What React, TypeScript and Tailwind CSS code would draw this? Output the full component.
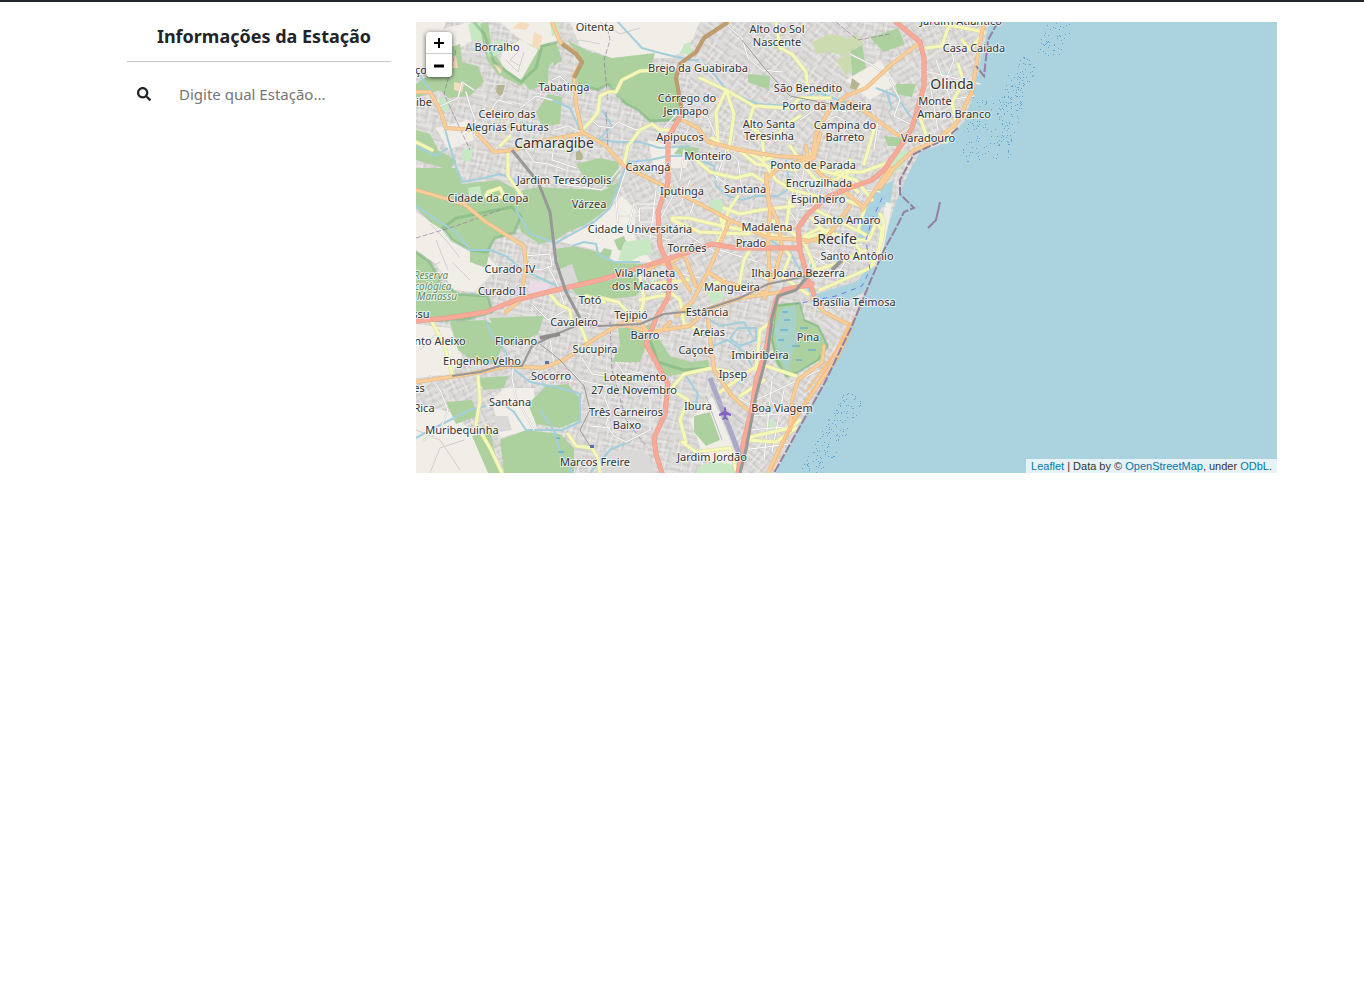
import { FaSearch } from "react-icons/fa";

type Label = [string, number, number];

const SMALL: Label[] = [
  ["Oitenta", 595, 31], ["Borralho", 497, 51], ["Brejo da Guabiraba", 698, 72], ["Tabatinga", 564, 91],
  ["Córrego do", 687, 102], ["Jenipapo", 686, 115], ["Celeiro das", 507, 118], ["Alegrias Futuras", 507, 131],
  ["Apipucos", 680, 141], ["Monteiro", 708, 160], ["Caxangá", 648, 171], ["Alto do Sol", 777, 33],
  ["Nascente", 777, 46], ["São Benedito", 808, 92], ["Porto da Madeira", 827, 110], ["Alto Santa", 769, 128],
  ["Teresinha", 769, 140], ["Campina do", 845, 129], ["Barreto", 845, 141], ["Jardim Atlântico", 961, 25],
  ["Casa Caiada", 974, 52], ["Monte", 935, 105], ["Amaro Branco", 954, 118], ["Varadouro", 928, 142],
  ["Ponto de Parada", 813, 169], ["Encruzilhada", 819, 187], ["Espinheiro", 818, 203], ["Santana", 745, 193],
  ["Iputinga", 682, 195], ["Santo Amaro", 847, 224], ["Santo Antônio", 857, 260], ["Madalena", 767, 231],
  ["Prado", 751, 247], ["Torrões", 687, 252], ["Cidade Universitária", 640, 233], ["Jardim Teresópolis", 564, 184],
  ["Cidade da Copa", 488, 202], ["Várzea", 589, 208], ["Curado IV", 510, 273], ["Curado II", 502, 295],
  ["Totó", 590, 304], ["Vila Planeta", 645, 277], ["dos Macacos", 645, 290], ["Mangueira", 732, 291],
  ["Ilha Joana Bezerra", 798, 277], ["Brasília Teimosa", 854, 306], ["Estância", 707, 316], ["Tejipió", 631, 319],
  ["Cavaleiro", 574, 326], ["Areias", 709, 336], ["Barro", 645, 339], ["Pina", 808, 341],
  ["Caçote", 696, 354], ["Imbiribeira", 760, 359], ["Sucupira", 595, 353], ["Floriano", 516, 345],
  ["Engenho Velho", 482, 365], ["Socorro", 551, 380], ["Ipsep", 733, 378], ["Loteamento", 635, 381],
  ["27 de Novembro", 634, 394], ["Três Carneiros", 626, 416], ["Baixo", 627, 429], ["Ibura", 698, 410],
  ["Boa Viagem", 782, 412], ["Jardim Jordão", 712, 461], ["Marcos Freire", 595, 466], ["Santana", 510, 406],
  ["Muribequinha", 462, 434], ["nto Aleixo", 440, 345], ["Rica", 424, 412], ["ço", 421, 74],
  ["ibe", 424, 106], ["es", 419, 392], ["ssu", 421, 318],
];

const FOREST = [
  "M567 40L590 52L612 58L655 53L652 64L662 72L677 70L678 98L684 112L676 121L650 122L638 110L624 103L616 90L606 84L598 90L578 84L575 70L582 60Z",
  "M478 24L488 22L492 50L506 70L521 80L532 68L541 45L534 75L521 86L497 74L487 60Z",
  "M548 46L556 42L562 60L554 66Z",
  "M521 80L541 45L549 60L548 84L530 90Z",
  "M416 84L436 70L448 48L460 44L462 62L478 66L484 82L470 96L448 98L440 90L416 98Z",
  "M548 94L562 97L560 124L542 127L536 112Z",
  "M536 47L549 43L560 52L548 68Z",
  "M416 130L430 134L438 150L456 160L450 170L416 160Z",
  "M416 168L456 168L462 184L498 180L514 188L520 208L509 212L490 218L460 226L443 230L430 222L416 208Z",
  "M443 228L456 218L512 207L521 216L514 233L495 238L487 252L470 250L452 240Z",
  "M522 190L540 187L556 188L604 190L622 180L616 196L608 208L594 219L585 225L566 233L556 240L540 244L521 232L516 212Z",
  "M556 249L574 246L602 253L616 263L648 264L636 270L600 280L576 288L560 280Z",
  "M572 289L636 274L646 282L636 296L602 300L580 298Z",
  "M576 164L600 158L618 162L620 172L610 188L586 180Z",
  "M470 250L490 250L486 268L470 262Z",
  "M416 252L430 262L442 284L458 294L488 296L492 312L464 320L416 321Z",
  "M450 322L484 320L502 328L504 342L495 364L474 362L458 350Z",
  "M490 318L544 316L538 334L512 346L496 340Z",
  "M528 404L546 386L568 384L580 398L580 420L560 428L536 424Z",
  "M500 440L526 430L560 434L574 448L574 473H504Z",
  "M472 436L490 432L500 473L488 473Z",
  "M446 402L472 400L478 416L456 424Z",
  "M648 338L660 340L670 356L690 362L708 360L710 370L688 373L668 376L656 366Z",
  "M618 328L642 328L646 345L640 362L612 362L620 345Z",
  "M748 74L770 76L769 90L748 82Z",
  "M870 38L898 28L905 44L884 52Z", "M850 50L862 42L866 68L852 76Z", "M896 84L916 84L912 97L897 94Z",
  "M884 136L904 138L904 146L888 146Z", "M694 416L710 412L720 440L706 446L694 432Z",
  "M614 240L624 236L630 252L618 250Z", "M604 248L612 250L610 258L600 254Z",
  "M476 378L508 376L504 388L484 390Z", "M680 146L700 148L694 156L674 154Z", "M644 326L652 324L654 332L646 332Z",
];

const COUNTRY = [
  "M416 22H446L436 50L416 58Z", "M500 22H552L560 40L534 48L516 36Z", "M570 22H700L690 44L672 58L612 58L580 46Z", "M500 66L520 80L534 66L540 48L520 40L502 50Z",
  "M416 212L446 232L486 254L498 268L474 292L454 290L436 264L416 250Z", "M560 242L600 218L622 196L636 210L634 236L652 262L616 262L596 250Z",
  "M416 324L450 328L462 356L452 374L416 378Z", "M416 404L450 412L482 440L496 473H416Z", "M504 388L534 388L536 428L500 438L492 400Z",
  "M690 420L712 396L738 460L724 470L704 456Z", "M846 80L880 60L896 84L870 100Z", "M648 140L690 150L686 168L654 168Z", "M436 128L468 120L474 140L448 150Z",
  "M416 44L446 28L470 22L480 36L450 54L440 70L416 76Z",
];

const LIGHT = [
  "M485 48L500 38L508 50L490 58Z", "M468 24L480 22L482 40L472 42Z", "M550 22H558L560 34L552 36Z", "M684 44L690 42L692 54L680 54Z",
  "M708 202L720 198L726 208L716 216Z", "M706 292L722 282L724 298L712 304Z", "M624 242L650 238L652 254L640 256L630 262L618 260Z",
  "M765 422L774 420L776 430L766 430Z", "M890 178L904 164L908 150L896 152L880 190Z", "M468 188L480 186L482 198L470 200Z",
  "M440 98L452 100L448 112L438 108Z", "M462 150L474 148L470 162L462 160Z", "M700 466L712 462L730 464L740 473H696Z",
];

const CREEKS = [
  "M416 70L430 90L440 110L448 140L456 166L462 182L484 178L500 174L515 180",
  "M515 180L517 212L530 234L556 243L572 234L594 222L610 208L620 180L628 162L650 160L668 156L690 156L714 166L716 186L728 196L742 200L756 196L778 196L790 188L786 160",
  "M416 206L440 222L456 232L470 250L490 250L506 256L520 268L548 282L570 292",
  "M616 20L642 48L664 54L690 60L700 60L716 76L728 92L758 104L794 106L816 92L850 104L866 112",
  "M548 98L570 108L580 130L590 138L616 142L640 142L660 148L690 146", "M416 146L436 156L448 148",
  "M572 246L584 242L596 244L598 254L614 262L640 262M602 110L612 126L600 138",
  "M486 320L492 336L506 352L512 368L530 382L560 388L580 394L580 422L562 430L526 430L514 412L498 400",
  "M554 432L560 450L572 473M540 410L556 434", "M690 308L720 326L744 322L752 336M730 338L738 328L756 328L756 340L740 346Z",
  "M876 88L896 96L910 116L926 130M886 90L892 110", "M712 346L728 340L744 352L752 366", "M416 438L442 424L470 410L486 406",
  "M686 376L698 394L694 410", "M590 473L610 450L632 440", "M770 240L790 252L800 270L810 292",
];

const WHITE = [
  "M466 92L470 106L476 122M478 140L484 120L498 100L512 104M520 108L536 96L552 100M436 108L458 98L462 82L474 90",
  "M552 80L560 76L570 86M728 26L742 38L748 58L762 70L782 72M700 60L722 88L750 104L764 108",
  "M590 118L598 126L612 128L618 122L636 130L642 128M664 128L686 104M690 110L708 118L716 136",
  "M554 144L552 160L576 168M546 176L560 184L602 190L622 166M554 130L568 126L580 132",
  "M640 208H654V222H640ZM634 204H660M634 204L628 230M656 190L650 240M676 190L660 220M620 216L640 216M630 232L670 240M628 164L616 200L618 222",
  "M524 256L550 254L552 266L540 270L524 268L530 262L545 262M548 266L558 286L566 310L548 320L532 304",
  "M526 150L534 162L548 164L566 170M850 54L870 64L888 76",
  "M514 360L512 378L516 398L534 430M430 376L440 390L448 410L440 430L424 440M582 358L592 374L606 376M550 340L554 364",
  "M616 362L624 374L642 372L650 400L650 430M604 396L610 412L606 424L614 436L626 442L650 430M590 426L610 428M564 364L580 380L606 386",
  "M756 400L820 370M752 416L810 412M748 430L798 426M742 450L790 444M772 380L764 460M784 390L772 452M738 398L756 408",
  "M890 80L900 100L894 116L910 124M920 70L980 84M948 40L954 60L944 84M936 60L958 120M922 104L974 96M930 84L938 130",
  "M800 120L820 106L846 112M790 100L808 84L820 90M816 126L836 116L850 124M866 100L878 122L874 150",
  "M794 180L790 212L800 226M804 168L800 196M816 200L808 216L822 232M820 170L830 190L844 204M840 192L826 216M800 186L826 178M794 170L812 196M800 210L820 206",
  "M800 250L824 262M810 234L836 258L826 272M822 222L848 246L862 244M806 276L826 250L850 264M848 210L866 190L880 192M812 254L806 274M820 262L840 270L850 254",
  "M716 180L726 150L738 160L742 190M700 164L726 184M680 230L722 256M664 270L700 278M720 250L758 262M684 150L680 180M690 180L680 206M700 186L690 214",
];

const YELLOW = [
  "M583 129L592 120L598 112L600 96L608 92L616 92L622 80L640 71L656 70",
  "M508 150L508 176L522 196M488 192L500 188L504 196L492 200L486 196L488 192M624 164L628 146L640 130L652 124L660 130L672 130",
  "M776 22L780 48L792 54L806 72L808 92M700 78L726 90L754 106L790 108L800 98L830 98M726 90L716 112L718 140L712 146M726 90L734 114L730 142L728 150",
  "M754 106L748 124L762 136L764 158M800 116L782 128L776 140M926 48L942 46L950 22M962 40L970 50L984 32L944 24",
  "M958 64L964 82L952 102L956 122L946 142M874 130L864 164M920 118L928 140M712 138L724 146L744 150L762 160L778 156M736 148L756 164L796 170",
  "M692 156L710 172L736 178L752 174L768 184M762 160L776 180L792 190L816 196L840 198L862 206M790 146L800 160L820 170L856 180L872 200",
  "M816 146L804 166L816 180L836 180L854 164M850 160L846 180L858 192M724 208L740 214L760 210L794 206M722 226L730 208L738 196",
  "M672 218L688 218L722 226L776 236L800 240L830 230M672 220L700 232L748 234L776 220M836 172L862 172L890 162",
  "M790 200L786 228L804 242L816 270L836 264L866 250M812 218L826 234L848 236L862 252L874 264M866 204L858 230L870 238L876 222L882 230L878 256L870 268L852 276L820 290",
  "M880 214L884 222L882 240L874 262M738 290L744 260L752 246M766 278L782 276L796 286L808 294M776 236L790 256L782 276M804 236L820 228L846 240L868 240M816 210L840 222L860 232",
  "M640 316L644 300L640 276M640 300L660 296L672 294L680 300L684 324L700 330M602 298L618 302L632 316M652 284L688 280",
  "M550 294L558 304L570 310L572 326M586 296L604 302M578 320L586 340L590 348M432 322L444 344L452 374M478 376L480 400L476 424L490 448L502 473",
  "M568 434L576 446L592 448L598 458L600 473M670 390L684 374L712 368L730 372M672 390L688 400L680 420L686 442",
  "M682 442L696 452L730 448L736 470M720 392L748 372L760 364L796 376M756 370L760 330L772 322M746 438L790 428L800 420M748 440L776 442L796 428",
  "M740 396L764 380M812 176L826 186L850 186M416 142L432 150M500 146L510 136M720 214L724 232L716 244M706 286L724 280",
];

const ORANGE = [
  "M416 92L430 92L440 110L446 128L474 130L494 152L514 150L536 142L580 134",
  "M552 22L560 42L575 52L582 62L574 75L576 104L582 132L605 145L624 166L640 174L668 188L700 204L730 220L768 238L806 240",
  "M416 190L464 204L486 222L524 246L526 268L520 300L506 312",
  "M682 120L698 128L708 142L740 150L776 156L812 158L816 134L828 112L846 96",
  "M728 22L704 38L696 52L680 64L676 78L682 112L680 118",
  "M846 96L866 88L892 64L918 44M848 102L872 116L896 134L916 138M820 134L814 158L796 162L776 170L766 180L768 200L778 222L782 248L776 270L764 298",
  "M766 174L770 210L768 244L770 280M806 146L808 160L822 176L836 184L862 206M862 210L878 186L890 168",
  "M984 22L978 54L972 92L956 124L934 142L914 150L894 168L880 188",
  "M730 220L708 272L692 302L676 316M768 294L740 298L706 310L690 326L650 332L620 324L590 342L564 360L542 368L510 366L470 374L416 382",
  "M620 324L636 318L648 332M708 320L714 370L732 396L748 410",
  "M708 272L724 282L768 294L794 290M806 242L828 236L850 206M850 330L838 356L816 388L794 420L778 452L768 473",
  "M824 346L822 362L798 380L792 400L790 430M812 298L824 312L848 324M660 332L670 322",
  "M690 290L676 268L660 262L648 270M672 262L684 254L690 270L696 286",
];

const RED = [
  "M896 22L920 42L924 58L924 86L912 128L902 144L884 170L872 180L844 190L826 198L808 214L798 228L800 250L808 280L814 294",
  "M416 321L448 318L486 312L516 300L556 290L600 280L640 268L670 258L712 244L736 248L766 248L800 248",
  "M684 110L668 138L668 182L658 212L660 246L670 268L668 298L656 318L646 344L656 362L668 384L665 414L654 438L656 454L662 473",
  "M812 284L784 290L776 300L770 326L766 350L756 380L752 408L744 440L738 473",
];

const TREES = "M416 430L440 440L460 470M430 473L440 448L464 440M416 276L440 262M452 262L470 280M448 270L436 240M560 50L580 40L600 44M600 22L620 34L640 28M520 50L510 60L520 66M420 350L440 330M430 224L446 240L460 258M506 60L518 72L524 52";

const DISTRICTS: [string, string][] = [
  ["url(#streetsA)", "M416 22H1010V473H416Z"],
  ["url(#streetsB)", "M600 150L700 160L760 260L690 330L600 280Z"],
  ["url(#streetsC)", "M690 22H860L880 130L760 150L690 110Z"],
  ["url(#streetsC)", "M730 360L850 300L800 473H730Z"],
  ["url(#streetsB)", "M416 330L560 360L530 473H416Z"],
  ["url(#streetsB)", "M900 22H1000L960 140L880 170Z"],
];

// Shallow-water dots scattered along the axis of each shoal.
const noise = (n: number) => {
  const v = Math.sin(n * 127.1) * 43758.5453;
  return v - Math.floor(v);
};

const SHOALS = [
  [1018, 76, 996, 160, 12, 120], [984, 100, 970, 165, 10, 60], [1062, 22, 1046, 56, 12, 50],
  [1030, 60, 1012, 110, 8, 50], [854, 396, 812, 473, 11, 130],
].map(([x1, y1, x2, y2, spread, n], k) =>
  Array.from({ length: n }, (_, i) => {
    const t = noise(i + k * 200);
    const s = noise(i + k * 200 + 0.5) - 0.5;
    return `M${Math.round(x1 + (x2 - x1) * t + s * spread * 2)} ${Math.max(23, Math.round(y1 + (y2 - y1) * t + s * 8))}l1 -1`;
  }).join(""),
);

function Roads({ paths, casing, color, width }: { paths: string[]; casing: string; color: string; width: number }) {
  const d = paths.join("");
  return (
    <g fill="none" strokeLinejoin="round" strokeLinecap="round">
      <path d={d} stroke={casing} strokeWidth={width + 1} />
      <path d={d} stroke={color} strokeWidth={width} />
    </g>
  );
}

function StreetPattern({ id, angle }: { id: string; angle: number }) {
  return (
    <pattern id={id} width="47" height="41" patternUnits="userSpaceOnUse" patternTransform={`rotate(${angle})`}>
      <rect width="47" height="41" fill="#dbdad8" />
      <path d="M0 3H23M27 5H47M0 9H12M14 12L34 10M38 12H47M0 17L18 19M22 18H40M4 25H20M24 23L47 26M0 32H14M18 30H30M34 33H47M6 38H28M32 39H44M3 0V12M8 9L6 25M13 0V12M18 12V30M23 3L25 18M29 5V23M34 10L33 30M40 0V18M44 12V32M11 25V38M27 23V39M38 26L36 41" stroke="#c8c6c4" strokeWidth="1" fill="none" />
      <path d="M0 6H18M20 8L40 7M4 14H14M22 15H44M0 21H16M20 21L38 20M2 29H22M28 27H46M0 35L26 34M30 36H47M5 3V17M10 17L12 32M16 3V21M21 19V34M26 0L27 15M31 12V27M37 5V20M42 18L41 36M24 30V41M47 0V15" stroke="#ecebe8" strokeWidth="1" fill="none" />
    </pattern>
  );
}

function CityMap() {
  return (
    <svg viewBox="416 22 861 451" preserveAspectRatio="xMinYMin slice" className="block h-full w-full" role="img" aria-label="Mapa do Recife">
      <defs>
        <StreetPattern id="streetsA" angle={12} />
        <StreetPattern id="streetsB" angle={-28} />
        <StreetPattern id="streetsC" angle={38} />
      </defs>
      {DISTRICTS.map(([fill, d]) => <path key={d} d={d} fill={fill} />)}
      <path d={COUNTRY.join("")} fill="#f1eee8" />
      <path d={TREES} fill="none" stroke="#d2cecb" />
      <path d={FOREST.join("")} fill="#add19e" />
      <path d={LIGHT.join("")} fill="#c8e8c4" />
      <path d="M812 42L828 34L842 36L856 46L846 56L830 52L816 54ZM836 60L850 54L852 70L846 76ZM846 40L856 34L864 44L854 50Z" fill="#cddcb0" />
      <path d="M534 32L542 36L540 50L532 46ZM520 22L530 24L526 30L512 28ZM494 64L504 66L500 74ZM454 82L464 84L462 92L454 90ZM446 58L456 56L458 68L448 68Z" fill="#f5dcba" />
      <path d="M497 85L505 85L503 93L500 96L496 92ZM576 152L580 150L583 156L582 160L576 160ZM852 78L860 84L856 90L850 88Z" fill="#b6b592" />
      <path d="M530 280L550 284L546 296L528 292Z" fill="#ebdbe8" />
      <path d="M558 270L572 264L578 282L566 288ZM492 416L508 416L512 430L500 432ZM600 452L644 450L656 473H596Z" fill="#dad9d8" />
      <g fill="none" stroke="#74b27b" strokeOpacity=".5" strokeWidth="3" strokeLinejoin="round">
        <path d="M474 22L484 34L494 62L521 82L536 68L542 46L558 42" />
        <path d="M416 252L430 262L442 284L458 294L488 296L492 312L464 320L416 321" />
        <path d="M443 228L456 218L512 207L521 216L514 233L495 238L487 252L470 250L452 240Z" />
        <path d="M578 84L598 90L608 84L618 96L626 104L638 110L650 121L676 120M650 340L658 362L684 370L710 368" />
      </g>
      <path d="M1278 22H990L982 52L975 88L965 120L948 142L920 152L908 174L900 192L896 202L884 238L876 266L862 300L850 326L826 380L800 424L776 473H1278Z" fill="#aad3df" />
      <path d="M882 186L894 180L890 204L882 206L868 242L858 240L864 212L872 194ZM816 294L856 282L870 266L878 270L864 292L842 304L822 306Z" fill="#aad3df" />
      <path d="M886 202L892 204L888 226L882 256L878 254L880 230Z" fill="#f1eee8" />
      <path d={CREEKS.join("")} fill="none" stroke="#a3cfdd" strokeWidth="2" strokeLinejoin="round" />
      <path d="M776 304L800 302L802 318L818 326L828 346L820 360L800 370L788 378L776 364L771 342Z" fill="#add19e" />
      <path d="M782 308L796 306L796 340L788 372L778 356L774 330Z" fill="#a8d2c8" />
      <path d="M786 376L778 362L772 340L776 306L800 303L804 320L818 326L828 346L818 360L798 372Z" fill="none" stroke="#74b27b" strokeOpacity=".6" strokeWidth="2" />
      <path d="M780 330h8M800 328h8M778 340h6M792 346h8M808 350h8M780 356h8M796 360h6M814 340h6M784 320h6M782 312h6M556 438h4M558 452h6" stroke="#4a9fe0" strokeWidth="1" />
      <g fill="none" stroke="#8f6b98" strokeOpacity=".6" strokeDasharray="5 2">
        <path d="M456 50L444 94L470 150M606 22L610 40L604 60L608 100M416 238L456 226L500 210M606 112L608 150M610 322L612 370L626 420L646 446M836 22L858 40L890 34" />
      </g>
      <Roads paths={WHITE} casing="#cfcdca" color="#ffffff" width={1} />
      <Roads paths={YELLOW} casing="#dadca4" color="#f5f8b8" width={3} />
      <Roads paths={ORANGE} casing="#e0b67c" color="#fbcd98" width={3} />
      <Roads paths={RED} casing="#e59a88" color="#f8aa98" width={4} />
      <path d="M728 22L704 38L696 52L680 64L676 78L682 112M562 44L576 54L582 62L574 78" fill="none" stroke="#a5895d" strokeWidth="4" strokeOpacity=".7" />
      <path d="M864 300L846 334L820 378L792 424L772 470M850 322L836 350L806 392" fill="none" stroke="#f7c188" strokeWidth="2" />
      <g fill="none" stroke="#989898" strokeLinejoin="round">
        <path d="M512 150L538 182L550 212L556 262L566 292L580 318" strokeWidth="3" />
        <path d="M452 376L480 372L500 366L522 366L532 346L552 336L580 324L600 326L640 324L664 314L704 310L740 298L768 284L808 276L812 270" strokeWidth="2" />
        <path d="M808 276L796 290L778 296L772 318L768 350L756 396L746 450L740 473" strokeWidth="3" />
        <path d="M540 344L560 360L584 386L590 410L580 430L590 446M742 40L766 70L790 96L840 106" strokeWidth="1" />
        <path d="M832 270L842 260" strokeWidth="4" />
      </g>
      <path d="M540 338L560 334" stroke="#8d8d8d" strokeWidth="4" />
      <path d="M710 378L740 456" stroke="#aaaac8" strokeWidth="5" />
      <path d="M710 394L738 420L744 424M706 396L722 440" stroke="#bbbbcc" strokeWidth="1" fill="none" />
      <path d="M725 407c1 0 1 1 1 4l5 3v2l-5-1v2l2 2v1l-3-1l-3 1v-1l2-2v-2l-5 1v-2l5-3c0-3 0-4 1-4z" fill="#8461c4" />
      <path d="M545 361h4v3h-4zM590 445h4v3h-4z" fill="#5d6eb0" />
      <g fill="none" stroke="#6b7cea" strokeDasharray="5 5">
        <path d="M882 198L872 220L866 240L870 270L862 286L836 296L796 304" />
      </g>
      <g fill="none" stroke="#967f9f">
        <path d="M998 22L988 40L984 76L976 66M958 128L944 140L926 148L914 154L900 180L900 194L914 208L904 212L896 228L884 250L870 282L852 326L824 384L798 430L774 473" strokeWidth="2" strokeDasharray="9 2" />
        <path d="M940 202L936 220L928 228" strokeWidth="2" />
      </g>
      {SHOALS.map((d) => <path key={d} d={d} stroke="#62a5d4" strokeWidth="1" />)}
      <g
        textAnchor="middle" fill="#333333" stroke="#ffffff" strokeOpacity=".7" strokeWidth="2" paintOrder="stroke"
        strokeLinejoin="round" className="font-['Noto_Sans',sans-serif] text-[11px]"
      >
        {SMALL.map(([name, x, y]) => <text key={`${name}${x}`} x={x} y={y}>{name}</text>)}
        <text x={554} y={148} className="text-[14px]">Camaragibe</text>
        <text x={952} y={89} className="text-[14px]">Olinda</text>
        <text x={837} y={244} className="text-[14px]">Recife</text>
        <g fill="#5f8a5f" className="text-[10px] italic">
          <text x={431} y={279}>Reserva</text>
          <text x={433} y={290}>cológica</text>
          <text x={437} y={300}>Manassu</text>
        </g>
      </g>
    </svg>
  );
}

export default function App() {
  return (
    <div className="min-h-screen border-t-2 border-[#212529] bg-white font-['Noto_Sans',sans-serif] text-[#212529]">
      <div className="flex gap-[25px] pt-5 pr-[87px] pl-[127px]">
        <aside className="w-[264px] shrink-0">
          <h1 className="border-b border-[#c8c8c8] pt-0.5 pb-[13px] pl-2.5 text-center text-[18px] leading-6 font-bold whitespace-nowrap">Informações da Estação</h1>
          <label className="mt-5 flex items-center gap-7 pl-2.5">
            <FaSearch className="size-3.5 shrink-0" aria-hidden="true" />
            <input
              type="text" aria-label="Estação" placeholder="Digite qual Estação..."
              className="h-6 min-w-0 flex-1 bg-transparent text-[15px] outline-none placeholder:text-[#757575]"
            />
          </label>
        </aside>
        <main className="relative h-[451px] min-w-0 flex-1 overflow-hidden bg-[#aad3df]">
          <CityMap />
          <div className="absolute top-2.5 left-2.5 flex w-[26px] flex-col overflow-hidden rounded bg-white text-black shadow-[0_1px_5px_rgba(0,0,0,0.65)]">
            <button type="button" aria-label="Aproximar" className="flex h-[22px] items-center justify-center border-b border-[#cccccc]">
              <svg viewBox="0 0 10 10" className="size-2.5"><path d="M0 5H10M5 0V10" stroke="currentColor" strokeWidth="2" /></svg>
            </button>
            <button type="button" aria-label="Afastar" className="flex h-[23px] items-center justify-center">
              <svg viewBox="0 0 10 10" className="size-2.5"><path d="M0 5H10" stroke="currentColor" strokeWidth="3" /></svg>
            </button>
          </div>
          <div className="absolute right-0 bottom-0 bg-white/70 px-[5px] font-['Liberation_Sans',sans-serif] text-[11px] leading-[14px] text-[#333333]">
            <a href="#leaflet" className="text-[#0078a8]">Leaflet</a> | Data by © <a href="#osm" className="text-[#0078a8]">OpenStreetMap</a>, under <a href="#odbl" className="text-[#0078a8]">ODbL</a>.
          </div>
        </main>
      </div>
    </div>
  );
}
